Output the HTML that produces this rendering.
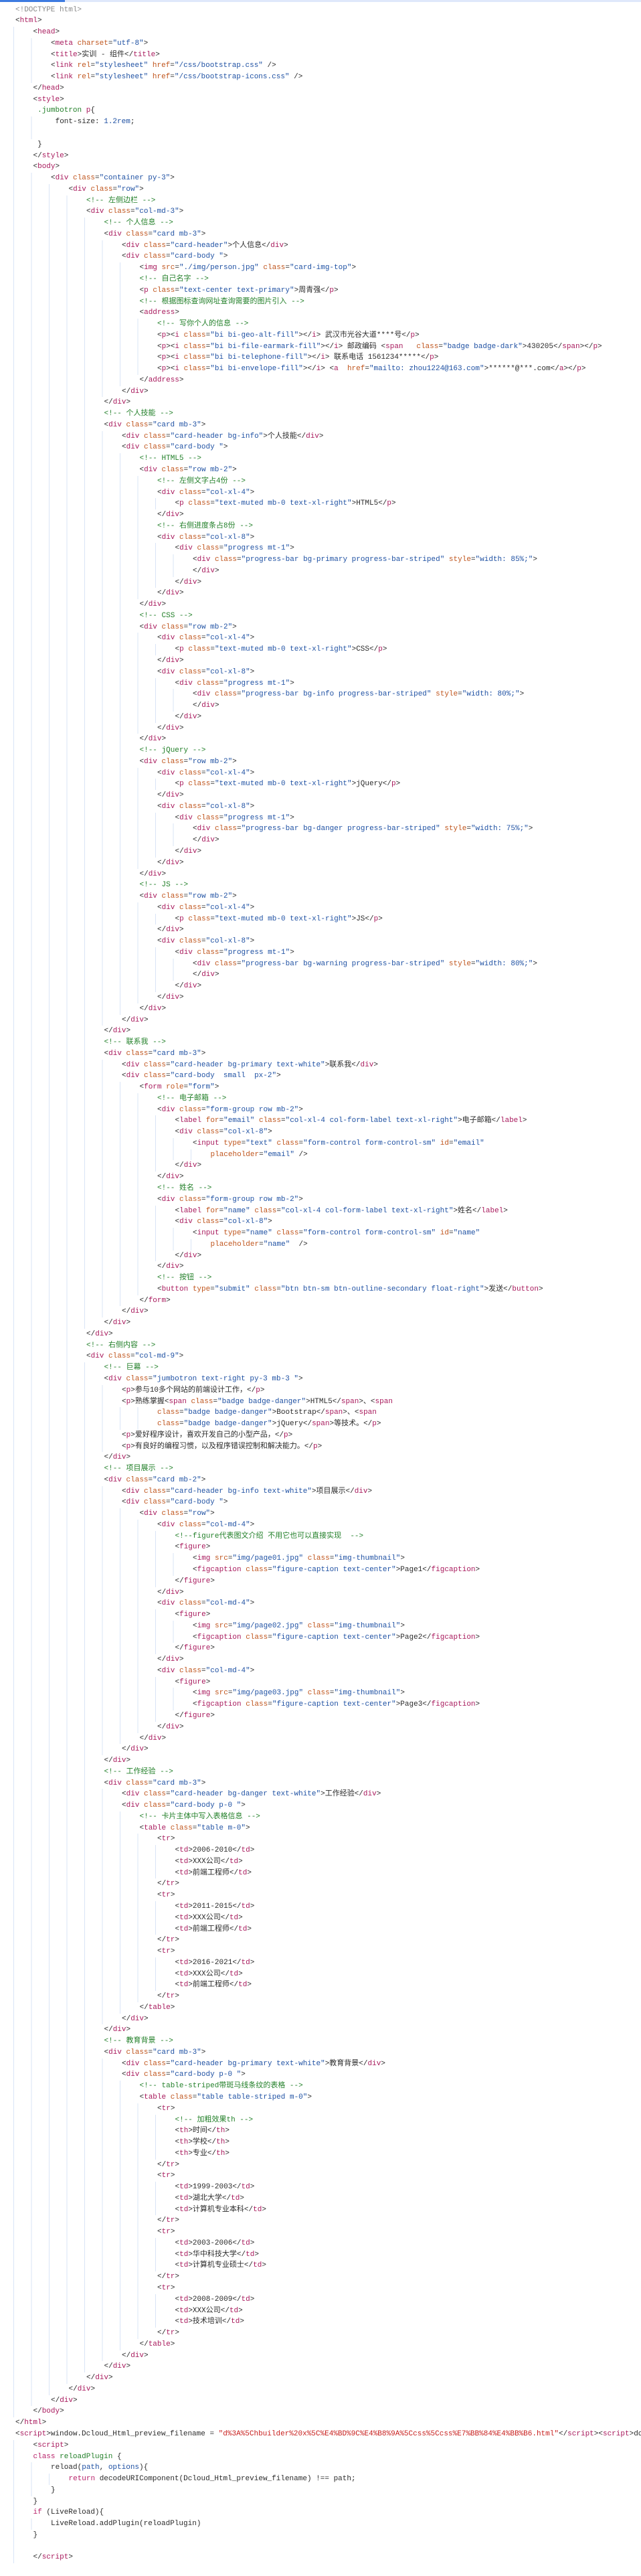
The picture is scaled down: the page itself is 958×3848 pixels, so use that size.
<!DOCTYPE html>
<html><head><meta charset="utf-8"><title>code</title>
<style>
html,body{margin:0;padding:0;background:#fff;width:958px;height:3848px;overflow:hidden}
body{position:relative;font-family:"Liberation Mono","Noto Sans CJK SC",monospace;font-size:11px;color:#2b2b2b}
#bar{position:absolute;left:0;top:0;width:958px;height:3px;background:#dfe8fb}
#bar2{position:absolute;left:0;top:0;width:97px;height:3px;background:#3d7be0}
#code{position:absolute;left:0;top:6.6px;width:958px}
p{margin:0;height:16.78px;line-height:16.78px;white-space:pre;overflow:hidden;
background-image:repeating-linear-gradient(to right,#d9e4f6 0,#d9e4f6 1px,transparent 1px,transparent 26.5px);
background-repeat:no-repeat;background-position:20px 0;background-size:0 100%}
.i0{padding-left:23px}
.i1{padding-left:49.5px;background-size:26.5px 100%}
.i2{padding-left:76px;background-size:53px 100%}
.i3{padding-left:102.5px;background-size:79.5px 100%}
.i4{padding-left:129px;background-size:106px 100%}
.i5{padding-left:155.5px;background-size:132.5px 100%}
.i6{padding-left:182px;background-size:159px 100%}
.i7{padding-left:208.5px;background-size:185.5px 100%}
.i8{padding-left:235px;background-size:212px 100%}
.i9{padding-left:261.5px;background-size:238.5px 100%}
.i10{padding-left:288px;background-size:265px 100%}
.i11{padding-left:314.5px;background-size:291.5px 100%}
.t{color:#a8195c}.a{color:#c0561e}.v{color:#1f51a3}.c{color:#23802a}.g{color:#8a8a8a}
.k{color:#b8226a}.n{color:#23802a}.r{color:#c8201e}.m{color:#1f51a3}
</style></head><body>
<div id="bar"></div><div id="bar2"></div>
<div id="code">
<p class="i0 g">&lt;!DOCTYPE html&gt;</p>
<p class="i0">&lt;<span class="t">html</span>&gt;</p>
<p class="i1">&lt;<span class="t">head</span>&gt;</p>
<p class="i2">&lt;<span class="t">meta</span> <span class="a">charset</span>=<span class="v">"utf-8"</span>&gt;</p>
<p class="i2">&lt;<span class="t">title</span>&gt;实训 - 组件&lt;/<span class="t">title</span>&gt;</p>
<p class="i2">&lt;<span class="t">link</span> <span class="a">rel</span>=<span class="v">"stylesheet"</span> <span class="a">href</span>=<span class="v">"/css/bootstrap.css"</span> /&gt;</p>
<p class="i2">&lt;<span class="t">link</span> <span class="a">rel</span>=<span class="v">"stylesheet"</span> <span class="a">href</span>=<span class="v">"/css/bootstrap-icons.css"</span> /&gt;</p>
<p class="i1">&lt;/<span class="t">head</span>&gt;</p>
<p class="i1">&lt;<span class="t">style</span>&gt;</p>
<p class="i1"> <span class="n">.jumbotron</span> <span class="t">p</span>{</p>
<p class="i2"> font-size: <span class="m">1.2rem</span>;</p>
<p class="i2"> </p>
<p class="i1"> }</p>
<p class="i1">&lt;/<span class="t">style</span>&gt;</p>
<p class="i1">&lt;<span class="t">body</span>&gt;</p>
<p class="i2">&lt;<span class="t">div</span> <span class="a">class</span>=<span class="v">"container py-3"</span>&gt;</p>
<p class="i3">&lt;<span class="t">div</span> <span class="a">class</span>=<span class="v">"row"</span>&gt;</p>
<p class="i4 c">&lt;!-- 左侧边栏 --&gt;</p>
<p class="i4">&lt;<span class="t">div</span> <span class="a">class</span>=<span class="v">"col-md-3"</span>&gt;</p>
<p class="i5 c">&lt;!-- 个人信息 --&gt;</p>
<p class="i5">&lt;<span class="t">div</span> <span class="a">class</span>=<span class="v">"card mb-3"</span>&gt;</p>
<p class="i6">&lt;<span class="t">div</span> <span class="a">class</span>=<span class="v">"card-header"</span>&gt;个人信息&lt;/<span class="t">div</span>&gt;</p>
<p class="i6">&lt;<span class="t">div</span> <span class="a">class</span>=<span class="v">"card-body "</span>&gt;</p>
<p class="i7">&lt;<span class="t">img</span> <span class="a">src</span>=<span class="v">"./img/person.jpg"</span> <span class="a">class</span>=<span class="v">"card-img-top"</span>&gt;</p>
<p class="i7 c">&lt;!-- 自己名字 --&gt;</p>
<p class="i7">&lt;<span class="t">p</span> <span class="a">class</span>=<span class="v">"text-center text-primary"</span>&gt;周青强&lt;/<span class="t">p</span>&gt;</p>
<p class="i7 c">&lt;!-- 根据图标查询网址查询需要的图片引入 --&gt;</p>
<p class="i7">&lt;<span class="t">address</span>&gt;</p>
<p class="i8 c">&lt;!-- 写你个人的信息 --&gt;</p>
<p class="i8">&lt;<span class="t">p</span>&gt;&lt;<span class="t">i</span> <span class="a">class</span>=<span class="v">"bi bi-geo-alt-fill"</span>&gt;&lt;/<span class="t">i</span>&gt; 武汉市光谷大道****号&lt;/<span class="t">p</span>&gt;</p>
<p class="i8">&lt;<span class="t">p</span>&gt;&lt;<span class="t">i</span> <span class="a">class</span>=<span class="v">"bi bi-file-earmark-fill"</span>&gt;&lt;/<span class="t">i</span>&gt; 邮政编码 &lt;<span class="t">span</span>   <span class="a">class</span>=<span class="v">"badge badge-dark"</span>&gt;430205&lt;/<span class="t">span</span>&gt;&lt;/<span class="t">p</span>&gt;</p>
<p class="i8">&lt;<span class="t">p</span>&gt;&lt;<span class="t">i</span> <span class="a">class</span>=<span class="v">"bi bi-telephone-fill"</span>&gt;&lt;/<span class="t">i</span>&gt; 联系电话 1561234*****&lt;/<span class="t">p</span>&gt;</p>
<p class="i8">&lt;<span class="t">p</span>&gt;&lt;<span class="t">i</span> <span class="a">class</span>=<span class="v">"bi bi-envelope-fill"</span>&gt;&lt;/<span class="t">i</span>&gt; &lt;<span class="t">a</span>  <span class="a">href</span>=<span class="v">"mailto: zhou1224@163.com"</span>&gt;******@***.com&lt;/<span class="t">a</span>&gt;&lt;/<span class="t">p</span>&gt;</p>
<p class="i7">&lt;/<span class="t">address</span>&gt;</p>
<p class="i6">&lt;/<span class="t">div</span>&gt;</p>
<p class="i5">&lt;/<span class="t">div</span>&gt;</p>
<p class="i5 c">&lt;!-- 个人技能 --&gt;</p>
<p class="i5">&lt;<span class="t">div</span> <span class="a">class</span>=<span class="v">"card mb-3"</span>&gt;</p>
<p class="i6">&lt;<span class="t">div</span> <span class="a">class</span>=<span class="v">"card-header bg-info"</span>&gt;个人技能&lt;/<span class="t">div</span>&gt;</p>
<p class="i6">&lt;<span class="t">div</span> <span class="a">class</span>=<span class="v">"card-body "</span>&gt;</p>
<p class="i7 c">&lt;!-- HTML5 --&gt;</p>
<p class="i7">&lt;<span class="t">div</span> <span class="a">class</span>=<span class="v">"row mb-2"</span>&gt;</p>
<p class="i8 c">&lt;!-- 左侧文字占4份 --&gt;</p>
<p class="i8">&lt;<span class="t">div</span> <span class="a">class</span>=<span class="v">"col-xl-4"</span>&gt;</p>
<p class="i9">&lt;<span class="t">p</span> <span class="a">class</span>=<span class="v">"text-muted mb-0 text-xl-right"</span>&gt;HTML5&lt;/<span class="t">p</span>&gt;</p>
<p class="i8">&lt;/<span class="t">div</span>&gt;</p>
<p class="i8 c">&lt;!-- 右侧进度条占8份 --&gt;</p>
<p class="i8">&lt;<span class="t">div</span> <span class="a">class</span>=<span class="v">"col-xl-8"</span>&gt;</p>
<p class="i9">&lt;<span class="t">div</span> <span class="a">class</span>=<span class="v">"progress mt-1"</span>&gt;</p>
<p class="i10">&lt;<span class="t">div</span> <span class="a">class</span>=<span class="v">"progress-bar bg-primary progress-bar-striped"</span> <span class="a">style</span>=<span class="v">"width: 85%;"</span>&gt;</p>
<p class="i10">&lt;/<span class="t">div</span>&gt;</p>
<p class="i9">&lt;/<span class="t">div</span>&gt;</p>
<p class="i8">&lt;/<span class="t">div</span>&gt;</p>
<p class="i7">&lt;/<span class="t">div</span>&gt;</p>
<p class="i7 c">&lt;!-- CSS --&gt;</p>
<p class="i7">&lt;<span class="t">div</span> <span class="a">class</span>=<span class="v">"row mb-2"</span>&gt;</p>
<p class="i8">&lt;<span class="t">div</span> <span class="a">class</span>=<span class="v">"col-xl-4"</span>&gt;</p>
<p class="i9">&lt;<span class="t">p</span> <span class="a">class</span>=<span class="v">"text-muted mb-0 text-xl-right"</span>&gt;CSS&lt;/<span class="t">p</span>&gt;</p>
<p class="i8">&lt;/<span class="t">div</span>&gt;</p>
<p class="i8">&lt;<span class="t">div</span> <span class="a">class</span>=<span class="v">"col-xl-8"</span>&gt;</p>
<p class="i9">&lt;<span class="t">div</span> <span class="a">class</span>=<span class="v">"progress mt-1"</span>&gt;</p>
<p class="i10">&lt;<span class="t">div</span> <span class="a">class</span>=<span class="v">"progress-bar bg-info progress-bar-striped"</span> <span class="a">style</span>=<span class="v">"width: 80%;"</span>&gt;</p>
<p class="i10">&lt;/<span class="t">div</span>&gt;</p>
<p class="i9">&lt;/<span class="t">div</span>&gt;</p>
<p class="i8">&lt;/<span class="t">div</span>&gt;</p>
<p class="i7">&lt;/<span class="t">div</span>&gt;</p>
<p class="i7 c">&lt;!-- jQuery --&gt;</p>
<p class="i7">&lt;<span class="t">div</span> <span class="a">class</span>=<span class="v">"row mb-2"</span>&gt;</p>
<p class="i8">&lt;<span class="t">div</span> <span class="a">class</span>=<span class="v">"col-xl-4"</span>&gt;</p>
<p class="i9">&lt;<span class="t">p</span> <span class="a">class</span>=<span class="v">"text-muted mb-0 text-xl-right"</span>&gt;jQuery&lt;/<span class="t">p</span>&gt;</p>
<p class="i8">&lt;/<span class="t">div</span>&gt;</p>
<p class="i8">&lt;<span class="t">div</span> <span class="a">class</span>=<span class="v">"col-xl-8"</span>&gt;</p>
<p class="i9">&lt;<span class="t">div</span> <span class="a">class</span>=<span class="v">"progress mt-1"</span>&gt;</p>
<p class="i10">&lt;<span class="t">div</span> <span class="a">class</span>=<span class="v">"progress-bar bg-danger progress-bar-striped"</span> <span class="a">style</span>=<span class="v">"width: 75%;"</span>&gt;</p>
<p class="i10">&lt;/<span class="t">div</span>&gt;</p>
<p class="i9">&lt;/<span class="t">div</span>&gt;</p>
<p class="i8">&lt;/<span class="t">div</span>&gt;</p>
<p class="i7">&lt;/<span class="t">div</span>&gt;</p>
<p class="i7 c">&lt;!-- JS --&gt;</p>
<p class="i7">&lt;<span class="t">div</span> <span class="a">class</span>=<span class="v">"row mb-2"</span>&gt;</p>
<p class="i8">&lt;<span class="t">div</span> <span class="a">class</span>=<span class="v">"col-xl-4"</span>&gt;</p>
<p class="i9">&lt;<span class="t">p</span> <span class="a">class</span>=<span class="v">"text-muted mb-0 text-xl-right"</span>&gt;JS&lt;/<span class="t">p</span>&gt;</p>
<p class="i8">&lt;/<span class="t">div</span>&gt;</p>
<p class="i8">&lt;<span class="t">div</span> <span class="a">class</span>=<span class="v">"col-xl-8"</span>&gt;</p>
<p class="i9">&lt;<span class="t">div</span> <span class="a">class</span>=<span class="v">"progress mt-1"</span>&gt;</p>
<p class="i10">&lt;<span class="t">div</span> <span class="a">class</span>=<span class="v">"progress-bar bg-warning progress-bar-striped"</span> <span class="a">style</span>=<span class="v">"width: 80%;"</span>&gt;</p>
<p class="i10">&lt;/<span class="t">div</span>&gt;</p>
<p class="i9">&lt;/<span class="t">div</span>&gt;</p>
<p class="i8">&lt;/<span class="t">div</span>&gt;</p>
<p class="i7">&lt;/<span class="t">div</span>&gt;</p>
<p class="i6">&lt;/<span class="t">div</span>&gt;</p>
<p class="i5">&lt;/<span class="t">div</span>&gt;</p>
<p class="i5 c">&lt;!-- 联系我 --&gt;</p>
<p class="i5">&lt;<span class="t">div</span> <span class="a">class</span>=<span class="v">"card mb-3"</span>&gt;</p>
<p class="i6">&lt;<span class="t">div</span> <span class="a">class</span>=<span class="v">"card-header bg-primary text-white"</span>&gt;联系我&lt;/<span class="t">div</span>&gt;</p>
<p class="i6">&lt;<span class="t">div</span> <span class="a">class</span>=<span class="v">"card-body  small  px-2"</span>&gt;</p>
<p class="i7">&lt;<span class="t">form</span> <span class="a">role</span>=<span class="v">"form"</span>&gt;</p>
<p class="i8 c">&lt;!-- 电子邮箱 --&gt;</p>
<p class="i8">&lt;<span class="t">div</span> <span class="a">class</span>=<span class="v">"form-group row mb-2"</span>&gt;</p>
<p class="i9">&lt;<span class="t">label</span> <span class="a">for</span>=<span class="v">"email"</span> <span class="a">class</span>=<span class="v">"col-xl-4 col-form-label text-xl-right"</span>&gt;电子邮箱&lt;/<span class="t">label</span>&gt;</p>
<p class="i9">&lt;<span class="t">div</span> <span class="a">class</span>=<span class="v">"col-xl-8"</span>&gt;</p>
<p class="i10">&lt;<span class="t">input</span> <span class="a">type</span>=<span class="v">"text"</span> <span class="a">class</span>=<span class="v">"form-control form-control-sm"</span> <span class="a">id</span>=<span class="v">"email"</span></p>
<p class="i11"><span class="a">placeholder</span>=<span class="v">"email"</span> /&gt;</p>
<p class="i9">&lt;/<span class="t">div</span>&gt;</p>
<p class="i8">&lt;/<span class="t">div</span>&gt;</p>
<p class="i8 c">&lt;!-- 姓名 --&gt;</p>
<p class="i8">&lt;<span class="t">div</span> <span class="a">class</span>=<span class="v">"form-group row mb-2"</span>&gt;</p>
<p class="i9">&lt;<span class="t">label</span> <span class="a">for</span>=<span class="v">"name"</span> <span class="a">class</span>=<span class="v">"col-xl-4 col-form-label text-xl-right"</span>&gt;姓名&lt;/<span class="t">label</span>&gt;</p>
<p class="i9">&lt;<span class="t">div</span> <span class="a">class</span>=<span class="v">"col-xl-8"</span>&gt;</p>
<p class="i10">&lt;<span class="t">input</span> <span class="a">type</span>=<span class="v">"name"</span> <span class="a">class</span>=<span class="v">"form-control form-control-sm"</span> <span class="a">id</span>=<span class="v">"name"</span></p>
<p class="i11"><span class="a">placeholder</span>=<span class="v">"name"</span>  /&gt;</p>
<p class="i9">&lt;/<span class="t">div</span>&gt;</p>
<p class="i8">&lt;/<span class="t">div</span>&gt;</p>
<p class="i8 c">&lt;!-- 按钮 --&gt;</p>
<p class="i8">&lt;<span class="t">button</span> <span class="a">type</span>=<span class="v">"submit"</span> <span class="a">class</span>=<span class="v">"btn btn-sm btn-outline-secondary float-right"</span>&gt;发送&lt;/<span class="t">button</span>&gt;</p>
<p class="i7">&lt;/<span class="t">form</span>&gt;</p>
<p class="i6">&lt;/<span class="t">div</span>&gt;</p>
<p class="i5">&lt;/<span class="t">div</span>&gt;</p>
<p class="i4">&lt;/<span class="t">div</span>&gt;</p>
<p class="i4 c">&lt;!-- 右侧内容 --&gt;</p>
<p class="i4">&lt;<span class="t">div</span> <span class="a">class</span>=<span class="v">"col-md-9"</span>&gt;</p>
<p class="i5 c">&lt;!-- 巨幕 --&gt;</p>
<p class="i5">&lt;<span class="t">div</span> <span class="a">class</span>=<span class="v">"jumbotron text-right py-3 mb-3 "</span>&gt;</p>
<p class="i6">&lt;<span class="t">p</span>&gt;参与10多个网站的前端设计工作，&lt;/<span class="t">p</span>&gt;</p>
<p class="i6">&lt;<span class="t">p</span>&gt;熟练掌握&lt;<span class="t">span</span> <span class="a">class</span>=<span class="v">"badge badge-danger"</span>&gt;HTML5&lt;/<span class="t">span</span>&gt;、&lt;<span class="t">span</span></p>
<p class="i8"><span class="a">class</span>=<span class="v">"badge badge-danger"</span>&gt;Bootstrap&lt;/<span class="t">span</span>&gt;、&lt;<span class="t">span</span></p>
<p class="i8"><span class="a">class</span>=<span class="v">"badge badge-danger"</span>&gt;jQuery&lt;/<span class="t">span</span>&gt;等技术。&lt;/<span class="t">p</span>&gt;</p>
<p class="i6">&lt;<span class="t">p</span>&gt;爱好程序设计，喜欢开发自己的小型产品，&lt;/<span class="t">p</span>&gt;</p>
<p class="i6">&lt;<span class="t">p</span>&gt;有良好的编程习惯，以及程序错误控制和解决能力。&lt;/<span class="t">p</span>&gt;</p>
<p class="i5">&lt;/<span class="t">div</span>&gt;</p>
<p class="i5 c">&lt;!-- 项目展示 --&gt;</p>
<p class="i5">&lt;<span class="t">div</span> <span class="a">class</span>=<span class="v">"card mb-2"</span>&gt;</p>
<p class="i6">&lt;<span class="t">div</span> <span class="a">class</span>=<span class="v">"card-header bg-info text-white"</span>&gt;项目展示&lt;/<span class="t">div</span>&gt;</p>
<p class="i6">&lt;<span class="t">div</span> <span class="a">class</span>=<span class="v">"card-body "</span>&gt;</p>
<p class="i7">&lt;<span class="t">div</span> <span class="a">class</span>=<span class="v">"row"</span>&gt;</p>
<p class="i8">&lt;<span class="t">div</span> <span class="a">class</span>=<span class="v">"col-md-4"</span>&gt;</p>
<p class="i9 c">&lt;!--figure代表图文介绍 不用它也可以直接实现  --&gt;</p>
<p class="i9">&lt;<span class="t">figure</span>&gt;</p>
<p class="i10">&lt;<span class="t">img</span> <span class="a">src</span>=<span class="v">"img/page01.jpg"</span> <span class="a">class</span>=<span class="v">"img-thumbnail"</span>&gt;</p>
<p class="i10">&lt;<span class="t">figcaption</span> <span class="a">class</span>=<span class="v">"figure-caption text-center"</span>&gt;Page1&lt;/<span class="t">figcaption</span>&gt;</p>
<p class="i9">&lt;/<span class="t">figure</span>&gt;</p>
<p class="i8">&lt;/<span class="t">div</span>&gt;</p>
<p class="i8">&lt;<span class="t">div</span> <span class="a">class</span>=<span class="v">"col-md-4"</span>&gt;</p>
<p class="i9">&lt;<span class="t">figure</span>&gt;</p>
<p class="i10">&lt;<span class="t">img</span> <span class="a">src</span>=<span class="v">"img/page02.jpg"</span> <span class="a">class</span>=<span class="v">"img-thumbnail"</span>&gt;</p>
<p class="i10">&lt;<span class="t">figcaption</span> <span class="a">class</span>=<span class="v">"figure-caption text-center"</span>&gt;Page2&lt;/<span class="t">figcaption</span>&gt;</p>
<p class="i9">&lt;/<span class="t">figure</span>&gt;</p>
<p class="i8">&lt;/<span class="t">div</span>&gt;</p>
<p class="i8">&lt;<span class="t">div</span> <span class="a">class</span>=<span class="v">"col-md-4"</span>&gt;</p>
<p class="i9">&lt;<span class="t">figure</span>&gt;</p>
<p class="i10">&lt;<span class="t">img</span> <span class="a">src</span>=<span class="v">"img/page03.jpg"</span> <span class="a">class</span>=<span class="v">"img-thumbnail"</span>&gt;</p>
<p class="i10">&lt;<span class="t">figcaption</span> <span class="a">class</span>=<span class="v">"figure-caption text-center"</span>&gt;Page3&lt;/<span class="t">figcaption</span>&gt;</p>
<p class="i9">&lt;/<span class="t">figure</span>&gt;</p>
<p class="i8">&lt;/<span class="t">div</span>&gt;</p>
<p class="i7">&lt;/<span class="t">div</span>&gt;</p>
<p class="i6">&lt;/<span class="t">div</span>&gt;</p>
<p class="i5">&lt;/<span class="t">div</span>&gt;</p>
<p class="i5 c">&lt;!-- 工作经验 --&gt;</p>
<p class="i5">&lt;<span class="t">div</span> <span class="a">class</span>=<span class="v">"card mb-3"</span>&gt;</p>
<p class="i6">&lt;<span class="t">div</span> <span class="a">class</span>=<span class="v">"card-header bg-danger text-white"</span>&gt;工作经验&lt;/<span class="t">div</span>&gt;</p>
<p class="i6">&lt;<span class="t">div</span> <span class="a">class</span>=<span class="v">"card-body p-0 "</span>&gt;</p>
<p class="i7 c">&lt;!-- 卡片主体中写入表格信息 --&gt;</p>
<p class="i7">&lt;<span class="t">table</span> <span class="a">class</span>=<span class="v">"table m-0"</span>&gt;</p>
<p class="i8">&lt;<span class="t">tr</span>&gt;</p>
<p class="i9">&lt;<span class="t">td</span>&gt;2006-2010&lt;/<span class="t">td</span>&gt;</p>
<p class="i9">&lt;<span class="t">td</span>&gt;XXX公司&lt;/<span class="t">td</span>&gt;</p>
<p class="i9">&lt;<span class="t">td</span>&gt;前端工程师&lt;/<span class="t">td</span>&gt;</p>
<p class="i8">&lt;/<span class="t">tr</span>&gt;</p>
<p class="i8">&lt;<span class="t">tr</span>&gt;</p>
<p class="i9">&lt;<span class="t">td</span>&gt;2011-2015&lt;/<span class="t">td</span>&gt;</p>
<p class="i9">&lt;<span class="t">td</span>&gt;XXX公司&lt;/<span class="t">td</span>&gt;</p>
<p class="i9">&lt;<span class="t">td</span>&gt;前端工程师&lt;/<span class="t">td</span>&gt;</p>
<p class="i8">&lt;/<span class="t">tr</span>&gt;</p>
<p class="i8">&lt;<span class="t">tr</span>&gt;</p>
<p class="i9">&lt;<span class="t">td</span>&gt;2016-2021&lt;/<span class="t">td</span>&gt;</p>
<p class="i9">&lt;<span class="t">td</span>&gt;XXX公司&lt;/<span class="t">td</span>&gt;</p>
<p class="i9">&lt;<span class="t">td</span>&gt;前端工程师&lt;/<span class="t">td</span>&gt;</p>
<p class="i8">&lt;/<span class="t">tr</span>&gt;</p>
<p class="i7">&lt;/<span class="t">table</span>&gt;</p>
<p class="i6">&lt;/<span class="t">div</span>&gt;</p>
<p class="i5">&lt;/<span class="t">div</span>&gt;</p>
<p class="i5 c">&lt;!-- 教育背景 --&gt;</p>
<p class="i5">&lt;<span class="t">div</span> <span class="a">class</span>=<span class="v">"card mb-3"</span>&gt;</p>
<p class="i6">&lt;<span class="t">div</span> <span class="a">class</span>=<span class="v">"card-header bg-primary text-white"</span>&gt;教育背景&lt;/<span class="t">div</span>&gt;</p>
<p class="i6">&lt;<span class="t">div</span> <span class="a">class</span>=<span class="v">"card-body p-0 "</span>&gt;</p>
<p class="i7 c">&lt;!-- table-striped带斑马线条纹的表格 --&gt;</p>
<p class="i7">&lt;<span class="t">table</span> <span class="a">class</span>=<span class="v">"table table-striped m-0"</span>&gt;</p>
<p class="i8">&lt;<span class="t">tr</span>&gt;</p>
<p class="i9 c">&lt;!-- 加粗效果th --&gt;</p>
<p class="i9">&lt;<span class="t">th</span>&gt;时间&lt;/<span class="t">th</span>&gt;</p>
<p class="i9">&lt;<span class="t">th</span>&gt;学校&lt;/<span class="t">th</span>&gt;</p>
<p class="i9">&lt;<span class="t">th</span>&gt;专业&lt;/<span class="t">th</span>&gt;</p>
<p class="i8">&lt;/<span class="t">tr</span>&gt;</p>
<p class="i8">&lt;<span class="t">tr</span>&gt;</p>
<p class="i9">&lt;<span class="t">td</span>&gt;1999-2003&lt;/<span class="t">td</span>&gt;</p>
<p class="i9">&lt;<span class="t">td</span>&gt;湖北大学&lt;/<span class="t">td</span>&gt;</p>
<p class="i9">&lt;<span class="t">td</span>&gt;计算机专业本科&lt;/<span class="t">td</span>&gt;</p>
<p class="i8">&lt;/<span class="t">tr</span>&gt;</p>
<p class="i8">&lt;<span class="t">tr</span>&gt;</p>
<p class="i9">&lt;<span class="t">td</span>&gt;2003-2006&lt;/<span class="t">td</span>&gt;</p>
<p class="i9">&lt;<span class="t">td</span>&gt;华中科技大学&lt;/<span class="t">td</span>&gt;</p>
<p class="i9">&lt;<span class="t">td</span>&gt;计算机专业硕士&lt;/<span class="t">td</span>&gt;</p>
<p class="i8">&lt;/<span class="t">tr</span>&gt;</p>
<p class="i8">&lt;<span class="t">tr</span>&gt;</p>
<p class="i9">&lt;<span class="t">td</span>&gt;2008-2009&lt;/<span class="t">td</span>&gt;</p>
<p class="i9">&lt;<span class="t">td</span>&gt;XXX公司&lt;/<span class="t">td</span>&gt;</p>
<p class="i9">&lt;<span class="t">td</span>&gt;技术培训&lt;/<span class="t">td</span>&gt;</p>
<p class="i8">&lt;/<span class="t">tr</span>&gt;</p>
<p class="i7">&lt;/<span class="t">table</span>&gt;</p>
<p class="i6">&lt;/<span class="t">div</span>&gt;</p>
<p class="i5">&lt;/<span class="t">div</span>&gt;</p>
<p class="i4">&lt;/<span class="t">div</span>&gt;</p>
<p class="i3">&lt;/<span class="t">div</span>&gt;</p>
<p class="i2">&lt;/<span class="t">div</span>&gt;</p>
<p class="i1">&lt;/<span class="t">body</span>&gt;</p>
<p class="i0">&lt;/<span class="t">html</span>&gt;</p>
<p class="i0">&lt;<span class="t">script</span>&gt;window.Dcloud_Html_preview_filename = <span class="r">"d%3A%5Chbuilder%20x%5C%E4%BD%9C%E4%B8%9A%5Ccss%5Ccss%E7%BB%84%E4%BB%B6.html"</span>&lt;/<span class="t">script</span>&gt;&lt;<span class="t">script</span>&gt;document</p>
<p class="i1">&lt;<span class="t">script</span>&gt;</p>
<p class="i1"><span class="k">class</span> <span class="n">reloadPlugin</span> {</p>
<p class="i2">reload(<span class="m">path</span>, <span class="m">options</span>){</p>
<p class="i3"><span class="k">return</span> decodeURIComponent(Dcloud_Html_preview_filename) !== path;</p>
<p class="i2">}</p>
<p class="i1">}</p>
<p class="i1"><span class="k">if</span> (LiveReload){</p>
<p class="i2">LiveReload.addPlugin(reloadPlugin)</p>
<p class="i1">}</p>
<p class="i1"> </p>
<p class="i1">&lt;/<span class="t">script</span>&gt;</p>
</div>
</body></html>
